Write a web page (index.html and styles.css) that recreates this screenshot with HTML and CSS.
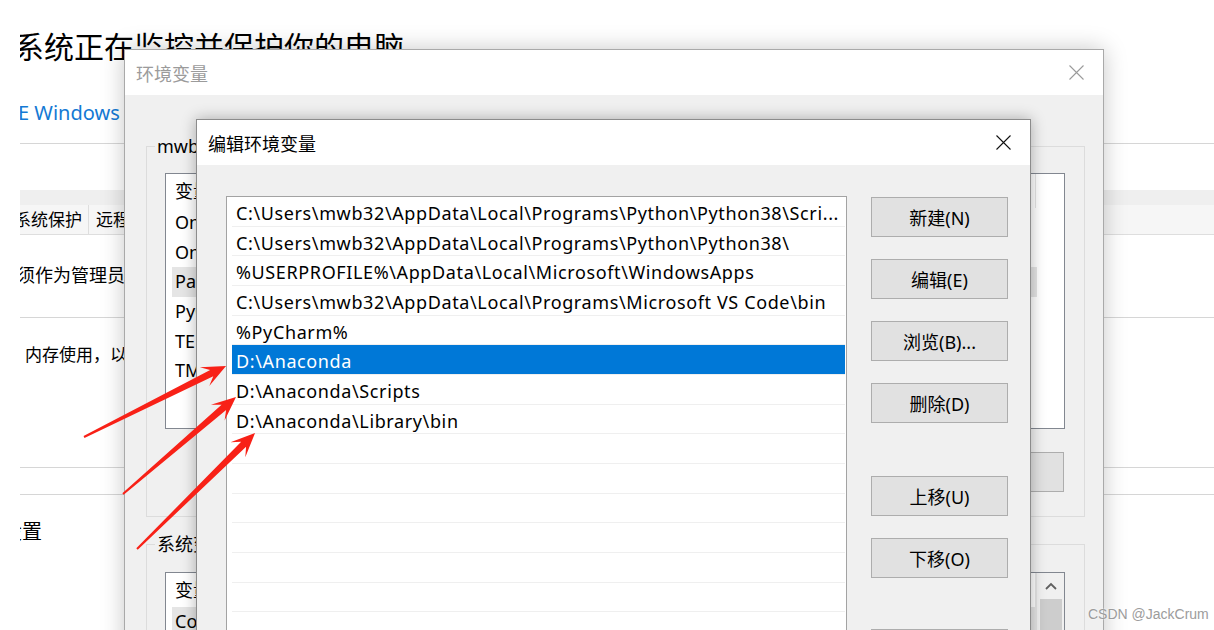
FILE: index.html
```html
<!DOCTYPE html>
<html lang="zh-CN">
<head>
<meta charset="UTF-8">
<title>编辑环境变量</title>
<link rel="stylesheet" href="styles.css">
</head>
<body>

<!-- settings page behind the dialogs -->
<div class="page">
    <h1 class="page-title">系统正在监控并保护你的电脑</h1>
    <div class="page-link">E Windows</div>
    <div class="page-rule"></div>
    <div class="tab-strip"></div>
    <div class="tabs">
        <span class="tab tab-first">系统保护</span>
        <span class="tab">远程</span>
    </div>
    <p class="page-text admin">须作为管理员</p>
    <div class="page-rule rule-2"></div>
    <p class="page-text mem">内存使用，以</p>
    <div class="page-rule rule-3"></div>
    <div class="page-rule rule-4"></div>
    <p class="page-text setting">设置</p>
</div>

<!-- 环境变量 window -->
<div class="win win-env">
    <div class="win-title">
        <span>环境变量</span>
        <svg class="win-close" viewBox="0 0 15 15"><path d="M0.5 0.5 L14.5 14.5 M14.5 0.5 L0.5 14.5"/></svg>
    </div>
    <div class="env-body">
        <fieldset class="group">
            <legend>mwb32 的用户变量(U)</legend>
            <div class="listview lv-user">
                <div class="lv-head"><span class="col-name">变量</span><span class="col-value">值</span></div>
                <div class="lv-row"><span class="col-name">OneDrive</span><span class="col-value">C:\Users\mwb32\OneDrive</span></div>
                <div class="lv-row"><span class="col-name">OneDriveConsumer</span><span class="col-value">C:\Users\mwb32\OneDrive</span></div>
                <div class="lv-row lv-sel"><span class="col-name">Path</span><span class="col-value">C:\Users\mwb32\AppData\Local\Programs\Python\Python38\Scripts\;C:\Users\mwb32\AppData\Local\Programs\Python\Python38\</span></div>
                <div class="lv-row"><span class="col-name">PyCharm</span><span class="col-value">D:\PyCharm\bin;</span></div>
                <div class="lv-row"><span class="col-name">TEMP</span><span class="col-value">%USERPROFILE%\AppData\Local\Temp</span></div>
                <div class="lv-row"><span class="col-name">TMP</span><span class="col-value">%USERPROFILE%\AppData\Local\Temp</span></div>
            </div>
            <div class="group-buttons">
                <button class="btn btn-small">新建(N)...</button>
                <button class="btn btn-small">编辑(E)...</button>
                <button class="btn btn-small">删除(D)</button>
            </div>
        </fieldset>

        <fieldset class="group group-sys">
            <legend>系统变量(S)</legend>
            <div class="listview lv-system">
                <div class="lv-content">
                    <div class="lv-head"><span class="col-name">变量</span><span class="col-value">值</span></div>
                    <div class="lv-row lv-sel"><span class="col-name">ComSpec</span><span class="col-value">C:\Windows\system32\cmd.exe</span></div>
                    <div class="lv-row"><span class="col-name">DriverData</span><span class="col-value">C:\Windows\System32\Drivers\DriverData</span></div>
                </div>
                <div class="scrollbar">
                    <div class="scroll-up"><svg viewBox="0 0 12 8"><path d="M1 7 L6 2 L11 7"/></svg></div>
                    <div class="scroll-thumb"></div>
                </div>
            </div>
        </fieldset>
    </div>
</div>

<!-- 编辑环境变量 window -->
<div class="win win-edit">
    <div class="win-title">
        <span>编辑环境变量</span>
        <svg class="win-close" viewBox="0 0 15 15"><path d="M0.5 0.5 L14.5 14.5 M14.5 0.5 L0.5 14.5"/></svg>
    </div>
    <div class="edit-body">
        <div class="path-list">
            <div class="path-row">C:\Users\mwb32\AppData\Local\Programs\Python\Python38\Scri...</div>
            <div class="path-row">C:\Users\mwb32\AppData\Local\Programs\Python\Python38\</div>
            <div class="path-row">%USERPROFILE%\AppData\Local\Microsoft\WindowsApps</div>
            <div class="path-row">C:\Users\mwb32\AppData\Local\Programs\Microsoft VS Code\bin</div>
            <div class="path-row">%PyCharm%</div>
            <div class="path-row selected">D:\Anaconda</div>
            <div class="path-row">D:\Anaconda\Scripts</div>
            <div class="path-row">D:\Anaconda\Library\bin</div>
            <div class="path-row"></div>
            <div class="path-row"></div>
            <div class="path-row"></div>
            <div class="path-row"></div>
            <div class="path-row"></div>
            <div class="path-row"></div>
            <div class="path-row"></div>
        </div>
        <div class="edit-buttons">
            <button class="btn">新建(N)</button>
            <button class="btn">编辑(E)</button>
            <button class="btn">浏览(B)...</button>
            <button class="btn">删除(D)</button>
            <button class="btn btn-apart">上移(U)</button>
            <button class="btn">下移(O)</button>
            <button class="btn btn-last">编辑文本(T)...</button>
        </div>
    </div>
</div>

<!-- red arrows drawn over the screenshot -->
<svg class="arrows" viewBox="0 0 1214 630">
    <polygon points="0,-1 142.8,-3.5 134.8,-10.5 158.8,0 134.8,10.5 142.8,3.5 0,1" transform="translate(84 437) rotate(-26.57)"/>
    <polygon points="0,-1 132.9,-3.5 124.9,-10.5 148.9,0 124.9,10.5 132.9,3.5 0,1" transform="translate(123 494) rotate(-40.64)"/>
    <polygon points="0,-1 149.5,-3.5 141.5,-10.5 165.5,0 141.5,10.5 149.5,3.5 0,1" transform="translate(137 549) rotate(-44.5)"/>
</svg>

<div class="watermark">CSDN @JackCrum</div>

</body>
</html>
```

FILE: styles.css
```css
* {
    box-sizing: border-box;
}

html, body {
    margin: 0;
    padding: 0;
}

body {
    position: relative;
    width: 1214px;
    height: 630px;
    overflow: hidden;
    background-color: #fff;
    font-family: "Noto Sans", "Noto Sans CJK SC", sans-serif;
    color: #000;
}

/* background settings page */
.page {
    margin-left: 20px;
    height: 630px;
    overflow: hidden;
}

.page-title {
    margin: 27px 0 0;
    font-size: 30px;
    font-weight: normal;
    line-height: 40px;
    text-indent: -6px;
    white-space: nowrap;
}

.page-link {
    margin-top: 31px;
    font-size: 20px;
    line-height: 30px;
    color: #1479d4;
    text-indent: -2px;
}

.page-rule {
    height: 1px;
    margin-top: 15px;
    background-color: #d6d6d6;
}

.rule-2 { margin-top: 29px; }
.rule-3 { margin-top: 99px; }
.rule-4 { margin-top: 26px; }

.tab-strip {
    height: 15px;
    margin-top: 46px;
    background-color: #efefef;
}

.tabs {
    display: flex;
    height: 30px;
    background-color: #f6f6f6;
    border-bottom: 1px solid #dedede;
    font-size: 17px;
    line-height: 29px;
}

.tab {
    padding: 0 7px;
    border-right: 1px solid #dedede;
}

.tab-first {
    margin-left: -6px;
    padding-left: 0;
    padding-right: 6px;
}

.page-text {
    margin: 0;
    font-size: 18px;
    line-height: 26px;
    white-space: nowrap;
}

.admin { margin-top: 27px; text-indent: -3px; }
.mem { margin-top: 24px; padding-left: 5px; font-size: 17px; }
.setting { margin-top: 24px; text-indent: -18px; font-size: 20px; }

/* windows */
.win {
    position: absolute;
    background-color: #f0f0f0;
    border: 1px solid #a9a9a9;
}

.win-env {
    left: 124px;
    top: 49px;
    width: 980px;
    height: 620px;
    box-shadow: 0 0 22px rgba(0, 0, 0, 0.22);
}

.win-edit {
    left: 196px;
    top: 119px;
    width: 835px;
    height: 560px;
    border-color: #8c8c8c;
    box-shadow: 0 0 14px rgba(0, 0, 0, 0.3);
}

.win-title {
    display: flex;
    justify-content: space-between;
    align-items: center;
    height: 45px;
    padding: 0 19px 0 11px;
    background-color: #fff;
    font-size: 18px;
}

.win-env .win-title {
    color: #9b9b9b;
}

.win-close {
    width: 15px;
    height: 15px;
    fill: none;
    stroke: #111;
    stroke-width: 1.1;
}

.win-env .win-close {
    stroke: #9b9b9b;
}

/* 环境变量 body */
.env-body {
    padding: 0 18px 0 21px;
}

.group {
    margin: 39px 0 0;
    padding: 15px 19px 24px 18px;
    border: 1px solid #dcdcdc;
    min-width: 0;
}

.group legend {
    margin-left: -10px;
    padding: 0 2px;
    font-size: 18px;
    line-height: 24px;
}

.group-sys {
    margin-top: 15px;
    padding-top: 16px;
}

.listview {
    height: 256px;
    overflow: hidden;
    background-color: #fff;
    border: 1px solid #828790;
    font-size: 18px;
}

.lv-system {
    display: flex;
    height: 200px;
}

.lv-content {
    flex: 1;
    min-width: 0;
}

.lv-head {
    display: flex;
    width: 870px;
    height: 34px;
    line-height: 34px;
    padding-left: 9px;
    border-right: 1px solid #e5e5e5;
    white-space: nowrap;
}

.lv-row {
    display: flex;
    width: 865px;
    height: 29.7px;
    line-height: 29.7px;
    margin-left: 6px;
    padding-left: 3px;
    white-space: nowrap;
    overflow: hidden;
}

.col-name {
    width: 260px;
    flex-shrink: 0;
}

.col-value {
    max-width: 520px;
    overflow: hidden;
    text-overflow: ellipsis;
}

.lv-sel {
    background-color: #e5e5e5;
}

.scrollbar {
    width: 28px;
    border-left: 1px solid #e3e3e3;
    padding: 0 2px 0 3px;
    background-color: #f0f0f0;
}

.scroll-up {
    display: flex;
    justify-content: center;
    align-items: center;
    height: 26px;
}

.scroll-up svg {
    width: 12px;
    height: 8px;
    fill: none;
    stroke: #606060;
    stroke-width: 1.8;
}

.scroll-thumb {
    height: 120px;
    background-color: #cdcdcd;
}

.group-buttons {
    display: flex;
    justify-content: flex-end;
    gap: 12px;
    margin-top: 23px;
    padding-right: 1px;
}

.btn {
    height: 40px;
    padding: 0;
    background-color: #e1e1e1;
    border: 1px solid #adadad;
    font-family: inherit;
    font-size: 18px;
    color: #000;
}

.btn-small {
    width: 140px;
}

/* 编辑环境变量 body */
.edit-body {
    display: flex;
    align-items: flex-start;
    padding: 31px 0 0 29px;
}

.path-list {
    width: 621px;
    height: 520px;
    overflow: hidden;
    padding: 0 1px 0 5px;
    background-color: #fff;
    border: 1px solid #a3a3a3;
}

.path-row {
    height: 29.67px;
    padding: 2px 0 0 4px;
    border-bottom: 1px solid #efefef;
    font-size: 18px;
    line-height: 28px;
    letter-spacing: 0.62px;
    white-space: nowrap;
    overflow: hidden;
}

.path-row.selected {
    background-color: #0078d7;
    color: #fff;
}

.edit-buttons {
    display: flex;
    flex-direction: column;
    gap: 22px;
    width: 137px;
    margin-left: 24px;
    padding-top: 1px;
}

.btn-apart { margin-top: 31px; }
.btn-last { margin-top: 29px; }

/* overlays */
.arrows {
    position: absolute;
    left: 0;
    top: 0;
    width: 1214px;
    height: 630px;
    fill: #f82117;
    pointer-events: none;
}

.watermark {
    position: absolute;
    left: 1088px;
    top: 606px;
    font-family: "Liberation Sans", Arial, sans-serif;
    font-size: 14px;
    color: #9c9c9c;
    text-shadow: 0 0 2px #fff;
}
```
